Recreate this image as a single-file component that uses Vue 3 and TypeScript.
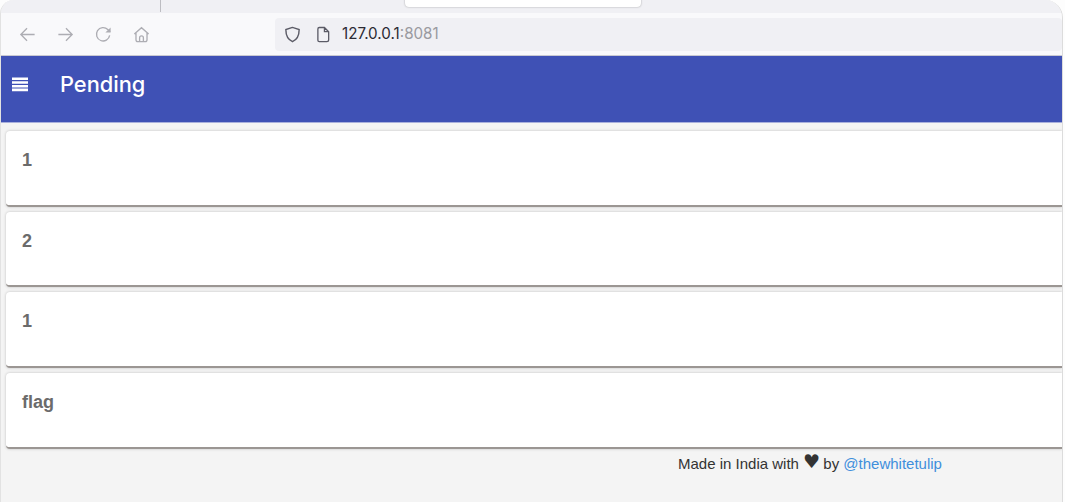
<template>
  <div class="window">
    <div class="tabstrip">
      <span class="tab-divider"></span>
      <span class="tab-active"></span>
    </div>

    <div class="toolbar">
      <div class="nav-icons">
        <svg class="nav-icon" viewBox="0 0 20 20"><path d="M17.500 10H3M9.500 3.500 3 10l6.500 6.500" /></svg>
        <svg class="nav-icon" viewBox="0 0 20 20"><path d="M2.500 10H17M10.500 3.500 17 10l-6.500 6.500" /></svg>
        <svg class="nav-icon" viewBox="0 0 20 20"><path d="M16.500 11a7 7 0 1 1-2-6.200L17 7" /><path class="solid" d="M17.500 2.500v5.500h-5.500z" /></svg>
        <svg class="nav-icon" viewBox="0 0 20 20"><path d="M2.500 9.500 10 2.800l7.500 6.700M4.200 8.500v7a2 2 0 0 0 2 2h7.600a2 2 0 0 0 2-2v-7M8 17.500v-4a2 2 0 0 1 4 0v4" /></svg>
      </div>
      <div class="urlbar">
        <svg class="shield" viewBox="0 0 20 20"><path d="M10 2.500 3 4.800c0 6.500 1.800 10.500 7 12.700 5.200-2.200 7-6.200 7-12.700z" /></svg>
        <svg class="page" viewBox="0 0 16 20"><path d="M3.500 2.500h5.500l4.500 4.500v8.500a2 2 0 0 1-2 2h-8a1.500 1.500 0 0 1-1.500-1.500v-12a1.500 1.500 0 0 1 1.500-1.500zM9 2.500V7h4.500" /></svg>
        <span class="url"><span class="host">127.0.0.1</span><span class="port">:8081</span></span>
      </div>
    </div>

    <header class="appbar">
      <svg class="menu" viewBox="0 0 16 16"><path d="M0 .5h16v2.600H0zM0 4.200h16v2.600H0zM0 7.900h16v2.600H0zM0 11.600h16v2.600H0z" /></svg>
      <h1 class="title">Pending</h1>
    </header>

    <main class="list">
      <div v-for="(item, i) in items" :key="i" class="card">{{ item }}</div>
    </main>

    <footer class="footer">
      Made in India with <span class="heart">♥</span> by <a class="link">@thewhitetulip</a>
    </footer>
  </div>
</template>

<script setup lang="ts">
const items: string[] = ['1', '2', '1', 'flag']
</script>

<style scoped>
.window {
  width: 1063px;
  height: 502px;
  background: #f4f4f4;
  border-left: 1px solid #e2e2e2;
  border-right: 1px solid #dcdcdc;
  border-top-left-radius: 14px;
  border-top-right-radius: 18px;
  box-sizing: border-box;
  overflow: hidden;
  font-family: "Liberation Sans", Arial, sans-serif;
}

.tabstrip {
  height: 13px;
  background: #f0f0f4;
  display: flex;
  position: relative;
}

.tab-divider {
  position: absolute;
  left: 159px;
  top: 0;
  width: 1px;
  height: 12px;
  background: #bdbdc2;
}

.tab-active {
  position: absolute;
  left: 404px;
  top: -4px;
  width: 236px;
  height: 11px;
  background: #fff;
  border-radius: 4px;
  box-shadow: 0 0 2px rgba(0, 0, 0, 0.35);
}

.toolbar {
  height: 42px;
  background: #f9f9fb;
  display: flex;
  align-items: center;
  padding-left: 16.5px;
  border-bottom: 1px solid #c9c9d2;
}

.nav-icons {
  display: flex;
  gap: 19.3px;
  width: 257.5px;
}

.nav-icon {
  width: 19px;
  height: 19px;
  fill: none;
  stroke: #adadb3;
  stroke-width: 1.4;
}

.nav-icon .solid {
  fill: #adadb3;
  stroke: none;
}

.urlbar {
  flex: 1;
  height: 33px;
  background: #f0f0f4;
  border-radius: 4px;
  display: flex;
  align-items: center;
  padding-left: 8px;
}

.shield {
  width: 19px;
  height: 19px;
  fill: none;
  stroke: #5b5b66;
  stroke-width: 1.5;
}

.page {
  width: 15px;
  height: 19px;
  margin-left: 14px;
  fill: none;
  stroke: #5b5b66;
  stroke-width: 1.4;
}

.url {
  margin-left: 11px;
  font-family: Inter, "Noto Sans", sans-serif;
  font-size: 15.2px;
  line-height: 18px;
}

.host {
  color: #2b2a33;
}

.port {
  color: #9a9aa0;
}

.appbar {
  height: 66px;
  background: #3f51b5;
  display: flex;
  align-items: flex-start;
  padding-left: 11px;
  border-bottom: 1px solid #a9b0dc;
}

.menu {
  width: 16px;
  height: 16px;
  margin-top: 21px;
  fill: #fff;
}

.title {
  margin: 14px 0 0 32px;
  font-family: Inter, "Noto Sans", sans-serif;
  font-size: 21.8px;
  line-height: 28px;
  font-weight: 500;
  color: #fff;
}

.list {
  padding: 8px 0 0 5px;
}

.card {
  height: 75.5px;
  margin-bottom: 5.2px;
  box-sizing: border-box;
  padding: 19px 16px;
  background: #fff;
  border-radius: 4px 0 0 4px;
  border-bottom: 2px solid #9b9693;
  box-shadow: 0 0 3px rgba(0, 0, 0, 0.22);
  font-size: 18px;
  line-height: 20px;
  font-weight: 700;
  color: #6b6b6b;
}

.footer {
  margin: 2.5px 0 0 677px;
  font-size: 15px;
  line-height: 20px;
  color: #333;
  white-space: nowrap;
}

.heart {
  font-family: "DejaVu Sans", sans-serif;
  font-size: 19px;
  line-height: 14px;
  margin-right: -1px;
  position: relative;
  top: -1px;
}

.link {
  color: #3f8fdc;
}
</style>

<style>
html,
body {
  background: #fdfdfd;
  overflow: hidden;
}
</style>
